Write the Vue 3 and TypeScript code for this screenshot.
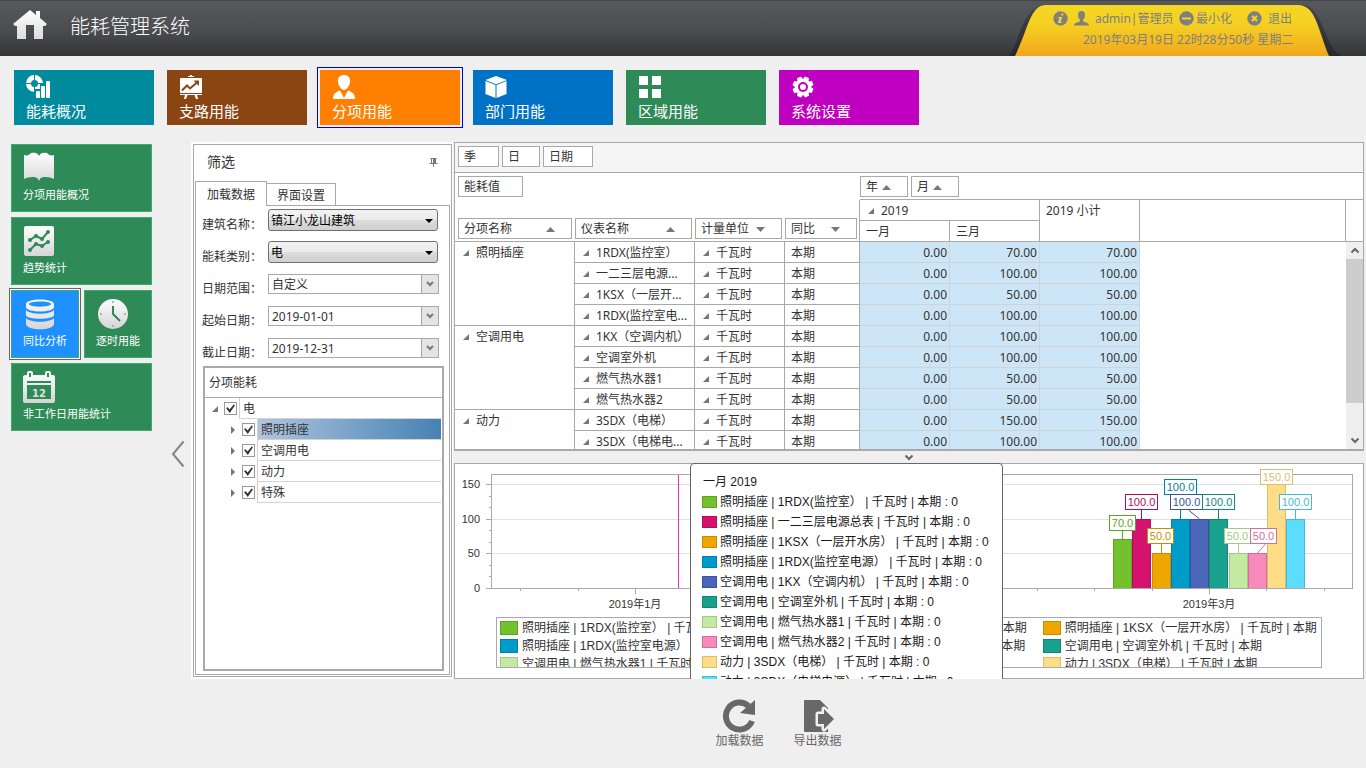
<script setup lang="ts">
import { ref } from 'vue'

interface NavItem { icon: string; label: string; color: string }
interface Series {
  group: string
  meter: string
  fill: string
  edge: string
  value: number
  labelX: number
  labelY: number
  stemX?: number
}
interface Row { meter: string; jan: string; mar: string; total: string; group?: string; span?: number }

const navItems: NavItem[] = [
  { icon: 'donut', label: '能耗概况', color: '#008a9e' },
  { icon: 'board', label: '支路用能', color: '#8b4513' },
  { icon: 'person', label: '分项用能', color: '#ff8000' },
  { icon: 'box', label: '部门用能', color: '#0072c6' },
  { icon: 'grid', label: '区域用能', color: '#2e8b57' },
  { icon: 'gear', label: '系统设置', color: '#c000c0' },
]
const activeNav = ref('person')

const sideItems = [
  { icon: 'book', label: '分项用能概况', wide: true },
  { icon: 'trend', label: '趋势统计', wide: true },
  { icon: 'db', label: '同比分析', wide: false },
  { icon: 'clock', label: '逐时用能', wide: false },
  { icon: 'calendar', label: '非工作日用能统计', wide: true },
]
const activeSide = ref('db')

const startDate = ref('2019-01-01')
const endDate = ref('2019-12-31')
const tree = ref([
  { label: '照明插座', checked: true, selected: true },
  { label: '空调用电', checked: true, selected: false },
  { label: '动力', checked: true, selected: false },
  { label: '特殊', checked: true, selected: false },
])
const rootChecked = ref(true)

const rows: Row[] = [
  { group: '照明插座', span: 4, meter: '1RDX(监控室）', jan: '0.00', mar: '70.00', total: '70.00' },
  { meter: '一二三层电源...', jan: '0.00', mar: '100.00', total: '100.00' },
  { meter: '1KSX（一层开...', jan: '0.00', mar: '50.00', total: '50.00' },
  { meter: '1RDX(监控室电...', jan: '0.00', mar: '100.00', total: '100.00' },
  { group: '空调用电', span: 4, meter: '1KX（空调内机）', jan: '0.00', mar: '100.00', total: '100.00' },
  { meter: '空调室外机', jan: '0.00', mar: '100.00', total: '100.00' },
  { meter: '燃气热水器1', jan: '0.00', mar: '50.00', total: '50.00' },
  { meter: '燃气热水器2', jan: '0.00', mar: '50.00', total: '50.00' },
  { group: '动力', span: 2, meter: '3SDX（电梯）', jan: '0.00', mar: '150.00', total: '150.00' },
  { meter: '3SDX（电梯电...', jan: '0.00', mar: '100.00', total: '100.00' },
]

const series: Series[] = [
  { group: '照明插座', meter: '1RDX(监控室）', fill: '#73c22d', edge: '#5fa323', value: 70, labelX: 654, labelY: 51 },
  { group: '照明插座', meter: '一二三层电源总表', fill: '#d6126f', edge: '#b00f5b', value: 100, labelX: 670, labelY: 30 },
  { group: '照明插座', meter: '1KSX（一层开水房）', fill: '#efa700', edge: '#c98c00', value: 50, labelX: 692, labelY: 64 },
  { group: '照明插座', meter: '1RDX(监控室电源）', fill: '#009cc9', edge: '#0082a8', value: 100, labelX: 709, labelY: 15 },
  { group: '空调用电', meter: '1KX（空调内机）', fill: '#4a66b8', edge: '#3c539b', value: 100, labelX: 715, labelY: 30, stemX: 733 },
  { group: '空调用电', meter: '空调室外机', fill: '#18a28e', edge: '#138777', value: 100, labelX: 747, labelY: 30 },
  { group: '空调用电', meter: '燃气热水器1', fill: '#c3e9a2', edge: '#a3c985', value: 50, labelX: 769, labelY: 64 },
  { group: '空调用电', meter: '燃气热水器2', fill: '#f78aba', edge: '#d16f9b', value: 50, labelX: 795, labelY: 64, stemX: 810 },
  { group: '动力', meter: '3SDX（电梯）', fill: '#ffdd87', edge: '#dbbd6b', value: 150, labelX: 805, labelY: 5 },
  { group: '动力', meter: '3SDX（电梯电源）', fill: '#5cdcff', edge: '#48b9d9', value: 100, labelX: 824, labelY: 30 },
]
const legendSeries = series.slice(0, 9)

const yOf = (v: number) => Math.round(124 - v * 0.6933)
const barX = (i: number) => Math.round(658 + i * 19.25)
const labelW = (s: Series) => (s.value < 100 ? 27 : 33)
const xTicks = Array.from({ length: 15 }, (_, k) => ({ x: Math.round(180 + (k - 2) * 57.4), major: (k - 2) % 5 === 0 }))
const yMinor = [16.67, 33.33, 66.67, 83.33, 116.67, 133.33]
</script>

<template>
  <div class="page">
    <header class="top">
      <svg class="home" width="36" height="32" viewBox="0 0 36 32">
        <defs>
          <linearGradient id="homeFill" x1="0" y1="0" x2="0" y2="1"><stop offset="0" stop-color="#fff" /><stop offset="1" stop-color="#ddd" /></linearGradient>
        </defs>
        <path fill="url(#homeFill)" d="M18 1 L24 6 V2 H28 V9 L35 15 L33 17 H31 V30 H22 V16 H14 V30 H5 V17 H3 L1 15 Z" />
      </svg>
      <h1>能耗管理系统</h1>
      <div class="account">
        <svg class="account-bg" width="350" height="56" viewBox="0 0 350 56">
          <defs>
            <linearGradient id="gold" x1="0" y1="0" x2="0" y2="1"><stop offset="0" stop-color="#f5d724" /><stop offset=".4" stop-color="#f4cf22" /><stop offset="1" stop-color="#f2a71c" /></linearGradient>
            <linearGradient id="shade" x1="0" y1="0" x2="0" y2="1"><stop offset="0" stop-color="#45464a" /><stop offset="1" stop-color="#26282a" /></linearGradient>
          </defs>
          <path fill="url(#shade)" d="M8 56 C20 46 20 5 48 5 H302 C324 5 324 50 342 56 Z" />
          <path fill="url(#gold)" d="M15 56 C28 30 30 5 46 5 H298 C316 5 318 30 329 56 Z" />
        </svg>
        <div class="account-body">
          <div class="account-line">
            <svg width="15" height="15" viewBox="0 0 15 15"><circle cx="7.5" cy="7.5" r="7.2" fill="#7f7f7f" /><path d="M8.6 2.6 h2 l-.5 2 h-2 z M5.2 6 h4 l-1.5 5 h1 l-.3 1 h-3.4 l1.4 -5 h-1.4 z" fill="#f4d322" /></svg>
            <svg class="user" width="15" height="15" viewBox="0 0 15 15"><path fill="#7f7f7f" d="M7.5 0 C10 0 11 2 11 4 C11 6 10 8 9 9 V10.500 C12 11.500 15 12 15 14.500 H0 C0 12 3 11.500 6 10.500 V9 C5 8 4 6 4 4 C4 2 5 0 7.500 0 Z" /></svg>
            <span class="who">admin|管理员</span>
            <button class="link-btn" type="button">
              <svg width="15" height="15" viewBox="0 0 15 15"><circle cx="7.500" cy="7.500" r="7.200" fill="#7f7f7f" /><rect x="3" y="6.500" width="9" height="2" fill="#f4d322" /></svg>最小化
            </button>
            <button class="link-btn exit" type="button">
              <svg width="15" height="15" viewBox="0 0 15 15"><circle cx="7.500" cy="7.500" r="7.200" fill="#7f7f7f" /><path d="M5 5 L10 10 M10 5 L5 10" stroke="#f4d322" stroke-width="2" /></svg>退出
            </button>
          </div>
          <time class="clock">2019年03月19日 22时28分50秒 星期二</time>
        </div>
      </div>
    </header>

    <nav class="nav">
      <button
        v-for="n in navItems" :key="n.icon" type="button" class="nav-tile"
        :class="{ active: n.icon === activeNav }" :style="{ background: n.color }" @click="activeNav = n.icon"
      >
        <svg width="24" height="24" viewBox="0 0 24 24" fill="#fff">
          <g v-if="n.icon === 'donut'">
            <circle cx="8.500" cy="8.500" r="6" fill="none" stroke="#fff" stroke-width="5" />
            <path d="M8.500 0 V5 M8.500 12 V17 M0 8.500 H5 M12 8.500 H17" stroke="#008a9e" stroke-width="1" />
            <path d="M9 14 H14 V9 H19 V4 H25 V24 H9 Z" fill="#008a9e" />
            <rect x="10" y="16" width="4" height="7" rx="1" /><rect x="15" y="11" width="4" height="12" rx="1" /><rect x="20" y="6" width="4" height="17" rx="1" />
          </g>
          <g v-else-if="n.icon === 'board'">
            <path d="M9 1 H11 V0 H13 V1 H15 V2 H9 Z M2 3 H22 Q23 3 23 4 V18 H1 V4 Q1 3 2 3 Z M1 19 H23 V20 H18 L19 24 H17 L15.500 20 H8.500 L7 24 H5 L6 20 H1 Z" />
            <path d="M3 15.500 L8 10.500 L11 13.500 L18 7.500" fill="none" stroke="#8b4513" stroke-width="2" /><path d="M14.500 5.500 H20 V11 Z" fill="#8b4513" />
          </g>
          <g v-else-if="n.icon === 'person'">
            <path d="M12 0 C16.500 0 18.500 3 18 7 C17.600 11 14.500 15 12 15 C9.500 15 6.400 11 6 7 C5.500 3 7.500 0 12 0 Z M8 15.500 L12 23 L16 15.500 C20 17 23 18.500 23 24 H1 C1 18.500 4 17 8 15.500 Z" />
          </g>
          <g v-else-if="n.icon === 'box'">
            <path d="M11 1 L22 5 L11 9.200 L0.500 5 Z M0.500 6 L10.500 10 V23 L0.500 19 Z M21.500 6 L11.500 10 V23 L21.500 19 Z" />
          </g>
          <g v-else-if="n.icon === 'grid'">
            <path d="M1 1 H10 V10 H1 Z M14 1 H23 V10 H14 Z M1 14 H10 V23 H1 Z M14 14 H23 V23 H14 Z" />
          </g>
          <g v-else>
            <rect v-for="a in 8" :key="a" x="9.500" y="1.500" width="5" height="5" rx="1" :transform="`rotate(${a * 45 + 22} 12 12)`" />
            <circle cx="12" cy="12" r="8.500" /><circle cx="12" cy="12" r="4" fill="none" stroke="#c000c0" stroke-width="2" />
          </g>
        </svg>
        <span>{{ n.label }}</span>
      </button>
    </nav>

    <main class="main">
      <aside class="side">
        <div class="side-tiles">
          <button
            v-for="s in sideItems" :key="s.icon" type="button" class="side-tile"
            :class="{ wide: s.wide, active: s.icon === activeSide }" @click="activeSide = s.icon"
          >
            <svg width="32" height="32" viewBox="0 0 32 32">
              <defs><linearGradient :id="'g' + s.icon" gradientUnits="userSpaceOnUse" x1="0" y1="0" x2="0" y2="32"><stop offset="0" stop-color="#fff" /><stop offset="1" stop-color="#d4d4d4" /></linearGradient></defs>
              <path v-if="s.icon === 'book'" fill="url(#gbook)" d="M1 3 C5 4 6 3 8 1 C12 0 15 1 16 4 C17 1 20 0 24 1 C26 3 27 4 31 3 V27 C27 25 19 24 17 27 L16 29 L15 27 C13 24 5 25 1 27 Z" />
              <g v-else-if="s.icon === 'trend'">
                <rect x="1" y="1" width="30" height="30" rx="2" fill="url(#gtrend)" />
                <path d="M7 15 L13 11 L19 14 L25 7 M7 25 L13 19 L19 21 L25 17" fill="none" stroke="#2e8b57" stroke-width="2" />
                <g fill="#2e8b57"><circle cx="7" cy="15" r="2" /><circle cx="13" cy="11" r="2" /><circle cx="19" cy="14" r="2" /><circle cx="25" cy="7" r="2" /><circle cx="7" cy="25" r="2" /><circle cx="13" cy="19" r="2" /><circle cx="19" cy="21" r="2" /><circle cx="25" cy="17" r="2" /></g>
              </g>
              <g v-else-if="s.icon === 'db'" fill="url(#gdb)">
                <path fill-rule="evenodd" d="M3 6 C3 0 31 0 31 6 V9 C31 15 3 15 3 9 Z M6 6 C6 9.500 28 9.500 28 6 C28 2.500 6 2.500 6 6 Z" />
                <path d="M3 12 C7 17 27 17 31 12 V17 C31 22 3 22 3 17 Z M3 20 C7 25 27 25 31 20 V26 C31 33 3 33 3 26 Z" />
              </g>
              <g v-else-if="s.icon === 'clock'">
                <circle cx="17" cy="16" r="15" fill="url(#gclock)" /><path d="M17 8 V16 L24 23" fill="none" stroke="#2e8b57" stroke-width="2" />
                <g fill="#7fb596"><circle cx="17" cy="4" r="1" /><circle cx="17" cy="28" r="1" /><circle cx="5" cy="16" r="1" /><circle cx="29" cy="16" r="1" /></g>
              </g>
              <g v-else>
                <path fill="url(#gcalendar)" fill-rule="evenodd" d="M3 4 H4 V2 Q4 0 6 0 H8 Q10 0 10 2 V4 H22 V2 Q22 0 24 0 H26 Q28 0 28 2 V4 H30 Q32 4 32 6 V30 Q32 32 30 32 H2 Q0 32 0 30 V6 Q0 4 3 4 Z M4 10 V12 H28 V10 Z M4 14 V28 H28 V14 Z M6 2 V6 H8 V2 Z M24 2 V6 H26 V2 Z" />
                <text x="16" y="26" text-anchor="middle" font-family="DejaVu Sans, sans-serif" font-weight="bold" font-size="10" fill="#e0e0e0">12</text>
              </g>
            </svg>
            <span>{{ s.label }}</span>
          </button>
        </div>
        <button class="collapse" type="button" aria-label="收起">
          <svg width="14" height="28" viewBox="0 0 14 28"><path d="M12.500 1.500 L2 14 L12.500 26.500" fill="none" stroke="#858585" stroke-width="2" /></svg>
        </button>
      </aside>

      <section class="work">
        <div class="panels">
          <section class="filter-wrap">
            <div class="filter">
              <div class="filter-head">
                <h2>筛选</h2>
                <svg width="9" height="9" viewBox="0 0 9 9"><path d="M1.500 0.500 H7.500 M2.500 0.500 V5 M0.500 5.500 H8.500 M4.500 5.500 V9" stroke="#777" fill="none" /><path d="M4 0 H7 V6 H4 Z" fill="#777" /></svg>
              </div>
              <div class="tabs" role="tablist">
                <button class="tab on" type="button" role="tab" aria-selected="true">加载数据</button>
                <button class="tab" type="button" role="tab" aria-selected="false">界面设置</button>
                <i class="tab-line"></i>
              </div>
              <div class="filter-body">
                <div class="fields">
                  <label for="building">建筑名称：</label>
                  <div class="ctl">
                    <select id="building" class="native"><option>镇江小龙山建筑</option></select>
                    <svg class="drop" width="8" height="4" viewBox="0 0 8 4"><path d="M0 0 H8 L4 4 Z" /></svg>
                  </div>
                  <label for="kind">能耗类别：</label>
                  <div class="ctl">
                    <select id="kind" class="native"><option>电</option></select>
                    <svg class="drop" width="8" height="4" viewBox="0 0 8 4"><path d="M0 0 H8 L4 4 Z" /></svg>
                  </div>
                  <label for="range">日期范围：</label>
                  <div class="ctl combo">
                    <select id="range"><option>自定义</option></select>
                    <span class="combo-btn"><svg width="8" height="6" viewBox="0 0 8 6"><path d="M1 1 L4 4 L7 1" /></svg></span>
                  </div>
                  <label for="start">起始日期：</label>
                  <div class="ctl combo">
                    <input id="start" v-model="startDate" type="text" />
                    <button class="combo-btn" type="button" aria-label="选择起始日期"><svg width="8" height="6" viewBox="0 0 8 6"><path d="M1 1 L4 4 L7 1" /></svg></button>
                  </div>
                  <label for="end">截止日期：</label>
                  <div class="ctl combo">
                    <input id="end" v-model="endDate" type="text" />
                    <button class="combo-btn" type="button" aria-label="选择截止日期"><svg width="8" height="6" viewBox="0 0 8 6"><path d="M1 1 L4 4 L7 1" /></svg></button>
                  </div>
                </div>
                <div class="tree">
                  <div class="tree-head">分项能耗</div>
                  <div class="tree-row">
                    <svg class="exp" width="6" height="6" viewBox="0 0 6 6"><path d="M6 0 V6 H0 Z" /></svg>
                    <input id="node-root" v-model="rootChecked" type="checkbox" />
                    <label for="node-root" class="cell">电</label>
                  </div>
                  <div v-for="(t, i) in tree" :key="t.label" class="tree-row child">
                    <svg class="exp" width="5" height="8" viewBox="0 0 5 8"><path d="M0 0 L4 4 L0 8 Z" /></svg>
                    <input :id="'node-' + i" v-model="t.checked" type="checkbox" />
                    <label :for="'node-' + i" class="cell" :class="{ sel: t.selected }">{{ t.label }}</label>
                  </div>
                </div>
              </div>
            </div>
          </section>

          <div class="right">
            <section class="pivot">
              <div class="pivot-filter">
                <button class="chip w41" type="button">季</button>
                <button class="chip w38" type="button">日</button>
                <button class="chip w50" type="button">日期</button>
              </div>
              <div class="pivot-grid">
                <table>
                  <colgroup>
                    <col class="c120" /><col class="c120" /><col class="c90" /><col class="c75" />
                    <col class="c90" /><col class="c90" /><col class="c100" /><col />
                  </colgroup>
                  <thead>
                    <tr class="chips-row">
                      <th colspan="4"><div class="chip-set"><button class="chip w65" type="button">能耗值</button></div></th>
                      <th colspan="4" class="lined">
                        <div class="chip-set flush">
                          <button class="chip w48" type="button">年<svg width="9" height="5" viewBox="0 0 9 5"><path d="M0 5 H9 L4.500 0 Z" /></svg></button>
                          <button class="chip w48" type="button">月<svg width="9" height="5" viewBox="0 0 9 5"><path d="M0 5 H9 L4.500 0 Z" /></svg></button>
                        </div>
                      </th>
                    </tr>
                    <tr class="head-row">
                      <th rowspan="2" class="field first"><button class="chip" type="button">分项名称<svg width="9" height="5" viewBox="0 0 9 5"><path d="M0 5 H9 L4.500 0 Z" /></svg></button></th>
                      <th rowspan="2" class="field"><button class="chip" type="button">仪表名称<svg width="9" height="5" viewBox="0 0 9 5"><path d="M0 5 H9 L4.500 0 Z" /></svg></button></th>
                      <th rowspan="2" class="field"><button class="chip" type="button">计量单位<svg width="9" height="5" viewBox="0 0 9 5"><path d="M0 0 H9 L4.500 5 Z" /></svg></button></th>
                      <th rowspan="2" class="field edge"><button class="chip" type="button">同比<svg width="9" height="5" viewBox="0 0 9 5"><path d="M0 0 H9 L4.500 5 Z" /></svg></button></th>
                      <th colspan="2" class="col exp-cell"><svg class="exp" width="6" height="6" viewBox="0 0 6 6"><path d="M6 0 V6 H0 Z" /></svg>2019</th>
                      <th rowspan="2" class="col top-text">2019 小计</th>
                      <th rowspan="2" class="rest"></th>
                    </tr>
                    <tr class="head-row">
                      <th class="col">一月</th>
                      <th class="col">三月</th>
                    </tr>
                  </thead>
                  <tbody>
                    <tr v-for="(r, i) in rows" :key="i">
                      <th v-if="r.group" :rowspan="r.span" class="exp-cell top-text"><svg class="exp" width="6" height="6" viewBox="0 0 6 6"><path d="M6 0 V6 H0 Z" /></svg>{{ r.group }}</th>
                      <th class="exp-cell"><svg class="exp" width="6" height="6" viewBox="0 0 6 6"><path d="M6 0 V6 H0 Z" /></svg>{{ r.meter }}</th>
                      <th class="exp-cell"><svg class="exp" width="6" height="6" viewBox="0 0 6 6"><path d="M6 0 V6 H0 Z" /></svg>千瓦时</th>
                      <th class="plain">本期</th>
                      <td>{{ r.jan }}</td>
                      <td>{{ r.mar }}</td>
                      <td>{{ r.total }}</td>
                      <td v-if="i === 0" :rowspan="rows.length" class="void"></td>
                    </tr>
                  </tbody>
                </table>
                <div class="scroll-col">
                  <div class="corner-a"></div>
                  <div class="corner-b"></div>
                  <div class="bar">
                    <button type="button" aria-label="向上"><svg width="10" height="7" viewBox="0 0 10 7"><path d="M1.500 5.500 L5 2 L8.500 5.500" /></svg></button>
                    <div class="thumb"></div>
                    <div class="track"></div>
                    <button type="button" aria-label="向下"><svg width="10" height="7" viewBox="0 0 10 7"><path d="M1.500 1.500 L5 5 L8.500 1.500" /></svg></button>
                  </div>
                </div>
              </div>
            </section>

            <div class="splitter"><svg width="10" height="7" viewBox="0 0 10 7"><path d="M1.500 1.500 L5 5 L8.500 1.500" fill="none" stroke="#666" stroke-width="2" /></svg></div>

            <section class="chart-wrap">
              <div class="chart">
                <svg class="plot" viewBox="0 0 908 150">
                  <g class="gridlines"><path v-for="v in [50, 100, 150]" :key="v" :d="`M37 ${yOf(v) + 0.5} H897`" /></g>
                  <rect x="36.500" y="10.500" width="861" height="114" fill="none" stroke="#a9a9a9" />
                  <g class="axis">
                    <path v-for="v in [0, 50, 100, 150]" :key="v" :d="`M31 ${yOf(v) + 0.5} H36`" />
                    <path v-for="v in yMinor" :key="v" :d="`M34 ${yOf(v) + 0.5} H36`" />
                    <path v-for="t in xTicks" :key="t.x" :d="`M${t.x + 0.5} 125 V${t.major ? 130 : 127}`" />
                  </g>
                  <g class="axis-text">
                    <text v-for="v in [0, 50, 100, 150]" :key="v" x="25" :y="yOf(v) + 4" text-anchor="end">{{ v }}</text>
                    <text x="180" y="144" text-anchor="middle">2019年1月</text>
                    <text x="754" y="144" text-anchor="middle">2019年3月</text>
                  </g>
                  <path d="M223.500 11 V124" stroke="#e52fc9" />
                  <rect
                    v-for="(s, i) in series" :key="'b' + i" :x="barX(i) + 0.5" :y="yOf(s.value) + 0.5"
                    width="18" :height="124 - yOf(s.value)" :fill="s.fill" :stroke="s.edge"
                  />
                  <path d="M640 124.500 H860" stroke="#a9a9a9" />
                  <path
                    v-for="(s, i) in series" :key="'s' + i" :stroke="s.edge"
                    :d="`M${(s.stemX ?? barX(i) + 9) + 0.5} ${s.labelY + 16} L${barX(i) + 9.5} ${yOf(s.value)}`"
                  />
                  <g v-for="(s, i) in series" :key="'l' + i">
                    <rect :x="s.labelX + 0.5" :y="s.labelY + 0.5" :width="labelW(s) - 1" height="15" fill="#fff" :stroke="s.edge" />
                    <text :x="s.labelX + labelW(s) / 2" :y="s.labelY + 12" text-anchor="middle" :fill="s.edge">{{ s.value.toFixed(1) }}</text>
                  </g>
                </svg>
                <ul class="legend">
                  <li v-for="s in legendSeries" :key="s.meter">
                    <i :style="{ background: s.fill, borderColor: s.edge }"></i>{{ s.group }} | {{ s.meter }} | 千瓦时 | 本期
                  </li>
                </ul>
              </div>
              <div class="tip" role="tooltip">
                <div class="tip-title">一月 2019</div>
                <div v-for="s in series" :key="s.meter" class="tip-row">
                  <i :style="{ background: s.fill, borderColor: s.edge }"></i>{{ s.group }} | {{ s.meter }} | 千瓦时 | 本期 : 0
                </div>
              </div>
            </section>
          </div>
        </div>

        <div class="actions">
          <button type="button">
            <svg width="34" height="34" viewBox="0 0 34 34"><path d="M30 22 A13.500 13.500 0 1 1 26.500 7" fill="none" stroke="#686868" stroke-width="6" /><path d="M33 1 V16 L18 14 Z" fill="#686868" /></svg>
            加载数据
          </button>
          <button type="button">
            <svg width="34" height="34" viewBox="0 0 34 34">
              <path d="M4 1 H19 L27 9 V33 H4 Q3 33 3 32 V2 Q3 1 4 1 Z" fill="#686868" />
              <path d="M17 15 H23 V10 L33 20 L23 30 V25 H17 Z" fill="#686868" stroke="#efefef" stroke-width="5" stroke-linejoin="round" />
              <path d="M17 15 H23 V10 L33 20 L23 30 V25 H17 Z" fill="#686868" />
            </svg>
            导出数据
          </button>
        </div>
      </section>
    </main>
  </div>
</template>

<style>
body { background: #efefef; }
</style>

<style scoped>
.page {
  min-height: 100vh;
  display: flex;
  flex-direction: column;
  background: #efefef;
  color: #333;
  font-family: "Noto Sans", "Noto Sans CJK SC", sans-serif;
  font-size: 12px;
  line-height: 16px;
}
.page *, .page *::before, .page *::after { box-sizing: border-box; }
button, input, select { font: inherit; color: inherit; margin: 0; padding: 0; border: 0; background: none; border-radius: 0; }
h1, h2, ul { margin: 0; padding: 0; font-weight: normal; list-style: none; }
svg { display: block; flex: none; }

.top {
  height: 56px;
  display: flex;
  align-items: center;
  padding-left: 12px;
  border-top: 1px solid #45454b;
  background: linear-gradient(#57585c, #4d4e52 50%, #323536);
}
.home { margin: 0 22px 8px 0; }
h1 { flex: 1; color: #fff; font-size: 20px; line-height: 28px; padding-bottom: 4px; font-weight: 300; }
.account { position: relative; width: 366px; height: 56px; }
.account-bg { position: absolute; left: 0; top: -1px; }
.account-body { position: relative; color: #7f7f7f; padding: 10px 0 0 53px; }
.account-line { display: flex; align-items: center; height: 16px; }
.user { margin: 0 6px; }
.who { width: 84px; white-space: nowrap; }
.link-btn { display: flex; align-items: center; gap: 2px; white-space: nowrap; }
.exit { margin-left: 15px; gap: 6px; }
.clock { display: block; padding: 5px 0 0 30px; }

.nav { display: flex; gap: 13px; padding: 14px 14px 17px; }
.nav-tile {
  display: flex;
  flex-direction: column;
  align-items: flex-start;
  gap: 2px;
  width: 140px;
  height: 55px;
  padding: 5px 12px 0;
  color: #fff;
  font-size: 15px;
  line-height: 20px;
}
.nav-tile.active { outline: 1px solid #0000e0; outline-offset: 2px; }

.main { flex: 1; display: flex; }
.side { flex: none; width: 191px; padding: 2px 0 0 11px; display: flex; }
.side-tiles { width: 141px; display: grid; grid-template-columns: 68px 68px; grid-auto-rows: 68px; gap: 5px; }
.side-tile {
  display: flex;
  flex-direction: column;
  align-items: flex-start;
  gap: 3px;
  border: 1px solid #3cab6b;
  background: #2e8b57;
  color: #fff;
  font-size: 11px;
  padding: 7px 0 0 11px;
  white-space: nowrap;
}
.side-tile.wide { grid-column: span 2; }
.side-tile.active { background: #1e90ff; box-shadow: 0 0 0 1px #fff, 0 0 0 2px #666; }
.collapse { align-self: center; margin-left: 19px; padding-bottom: 4px; }

.work { flex: 1; min-width: 0; }
.panels { display: flex; gap: 1px; padding-right: 2px; }
.filter-wrap { flex: none; width: 262px; background: #fff; padding: 2px 1px 2px 2px; }
.filter { height: 100%; display: flex; flex-direction: column; border: 1px solid #a9a9a9; padding: 0 1px 1px; }
.filter-head { height: 36px; display: flex; align-items: center; justify-content: space-between; padding: 0 12px 2px; }
h2 { font-size: 14px; line-height: 20px; }
.tabs { display: flex; align-items: flex-end; height: 25px; }
.tab { height: 23px; width: 69px; padding-top: 2px; border: 1px solid #a9a9a9; border-left: 0; background: #fff; }
.tab.on { height: 25px; width: 72px; border-left: 1px solid #a9a9a9; border-bottom: 0; }
.tab-line { flex: 1; height: 1px; background: #a9a9a9; }
.filter-body { flex: 1; display: flex; flex-direction: column; align-items: flex-end; border: 1px solid #a9a9a9; border-top: 0; padding: 3px 5px 3px 6px; }
.fields { align-self: flex-start; display: grid; grid-template-columns: 66px 171px; grid-auto-rows: 22px; row-gap: 10px; align-items: center; }
.fields label { padding-top: 10px; white-space: nowrap; }
.ctl { position: relative; display: flex; }
select { appearance: none; width: 100%; }
.native {
  width: 170px;
  height: 22px;
  border: 1px solid #707070;
  border-radius: 3px;
  padding: 2px 2px 0;
  color: #000;
  background: linear-gradient(#f2f2f2, #ebebeb 50%, #dcdcdc 51%, #cfcfcf);
}
.drop { position: absolute; right: 6px; top: 10px; fill: #000; pointer-events: none; }
.combo { height: 20px; border: 1px solid #a9a9a9; background: #fff; }
.combo select, .combo input { flex: 1; min-width: 0; padding: 2px 3px 0; }
.combo-btn { flex: none; width: 17px; display: flex; align-items: center; justify-content: center; background: #e4e4e4; border-left: 1px solid #a9a9a9; }
.combo-btn path { fill: none; stroke: #777; stroke-width: 2; }

.tree { flex: 1; margin-top: 7px; border: 2px solid #a9a9a9; background: #fff; width: 241px; }
.tree-head { height: 30px; padding: 7px 4px; border-bottom: 1px solid #a9a9a9; }
.tree-row { display: flex; align-items: center; height: 21px; padding: 0 1px 0 7px; }
.tree-row .exp { margin-right: 6px; }
.tree-row.child { padding-left: 26px; }
.exp { fill: #777; }
.tree input {
  appearance: none;
  position: relative;
  flex: none;
  width: 13px;
  height: 13px;
  border: 1px solid #999;
  margin-right: 2px;
  background: #fff;
}
.tree input:checked::after {
  content: "";
  position: absolute;
  inset: 1px;
  background: #333;
  clip-path: polygon(0 45%, 18% 35%, 40% 62%, 85% 5%, 100% 15%, 42% 100%);
}
.cell { flex: 1; height: 21px; line-height: 20px; padding: 1px 0 0 3px; border-left: 1px solid #d3d3d3; border-bottom: 1px solid #d3d3d3; }
.cell.sel { background: linear-gradient(90deg, #b0c4de, #4682b4); }

.right { flex: 1; min-width: 0; display: flex; flex-direction: column; }
.pivot { height: 309px; display: flex; flex-direction: column; border: 1px solid #a9a9a9; border-bottom-width: 2px; background: #fff; }
.pivot-filter { flex: none; display: flex; gap: 3px; height: 30px; padding: 3px; background: #f5f5f5; border-bottom: 1px solid #a9a9a9; }
.chip {
  display: flex;
  align-items: center;
  justify-content: space-between;
  width: 100%;
  height: 21px;
  padding: 1px 16px 0 5px;
  border: 1px solid #a9a9a9;
  background: #fff;
  white-space: nowrap;
}
.chip svg { fill: #777; }
.w38 { width: 38px; } .w41 { width: 41px; } .w48 { width: 48px; } .w50 { width: 50px; } .w65 { width: 65px; }
.pivot-grid { flex: 1; min-height: 0; display: flex; overflow: hidden; }
table { flex: 1; align-self: flex-start; width: 100%; table-layout: fixed; border-collapse: separate; border-spacing: 0; }
.c75 { width: 75px; } .c90 { width: 90px; } .c100 { width: 100px; } .c120 { width: 120px; }
th, td { padding: 2px 0 0; font-weight: normal; text-align: left; white-space: nowrap; overflow: hidden; height: 21px; }
.chips-row th { height: 27px; padding-top: 0; vertical-align: top; }
.chip-set { display: flex; gap: 3px; padding: 3px 3px 0; }
.chip-set.flush { padding-left: 0; }
.lined { border-bottom: 1px solid #a9a9a9; }
.field { vertical-align: bottom; padding: 0 3px 2px 0; border-bottom: 1px solid #a9a9a9; }
.field.first { padding-left: 3px; }
.field.edge { border-right: 1px solid #a9a9a9; padding-right: 2px; }
.col { padding-left: 6px; border-right: 1px solid #a9a9a9; border-bottom: 1px solid #a9a9a9; }
.rest { border-bottom: 1px solid #a9a9a9; }
th.exp-cell { position: relative; padding-left: 21px; }
.exp-cell .exp { position: absolute; left: 8px; top: 8px; }
.top-text { vertical-align: top; padding-top: 3px; }
tbody th { border-right: 1px solid #a9a9a9; border-bottom: 1px solid #a9a9a9; }
.plain { padding-left: 6px; }
td { background: #cde6f7; border-right: 1px solid #d3d3d3; border-bottom: 1px solid #d3d3d3; text-align: right; padding-right: 2px; }
td.void { background: #fff; border: 0; }

.scroll-col { flex: none; width: 18px; display: flex; flex-direction: column; }
.corner-a { height: 27px; border-bottom: 1px solid #a9a9a9; }
.corner-b { height: 42px; border-left: 1px solid #a9a9a9; border-bottom: 1px solid #a9a9a9; }
.bar { flex: 1; display: flex; flex-direction: column; margin-left: 1px; background: #efefef; }
.bar button { height: 17px; display: flex; align-items: center; justify-content: center; }
.bar path { fill: none; stroke: #666; stroke-width: 2; }
.thumb { flex: 5; background: #cdcdcd; }
.track { flex: 1; }

.splitter { height: 12px; display: flex; align-items: center; justify-content: center; }
.chart-wrap { position: relative; overflow: hidden; height: 216px; }
.chart { height: 100%; border: 1px solid #a9a9a9; background: #fff; }
.plot { width: 100%; height: auto; }
.gridlines path { stroke: #e0e0e0; }
.axis path { stroke: #a9a9a9; }
.plot text, .legend, .tip { font-family: "Liberation Sans", "Noto Sans CJK SC", sans-serif; }
.plot text { font-size: 11px; }
.axis-text { fill: #333; }
.legend {
  display: grid;
  grid-template-columns: repeat(3, minmax(0, 1fr));
  grid-auto-rows: 18px;
  height: 51px;
  margin: 3px 41px 0;
  padding: 1px 7px 0 3px;
  border: 1px solid #a9a9a9;
  overflow: hidden;
}
.legend li { display: flex; align-items: center; white-space: pre; }
.legend i { width: 18px; height: 14px; border: 1px solid; margin-right: 4px; flex: none; }
.tip {
  position: absolute;
  left: 236px;
  top: 0;
  min-width: 313px;
  border: 1px solid #666;
  border-radius: 4px;
  background: #fff;
  color: #1a1a1a;
  padding: 8px 10px 8px 11px;
}
.tip-title { height: 20px; line-height: 20px; padding-left: 1px; }
.tip-row { display: flex; align-items: center; height: 20px; white-space: pre; }
.tip-row i { width: 15px; height: 12px; border: 1px solid; margin-right: 3px; flex: none; }

.actions { display: flex; justify-content: center; gap: 30px; padding-top: 20px; color: #666; }
.actions button { display: flex; flex-direction: column; align-items: center; line-height: 16px; }
</style>
